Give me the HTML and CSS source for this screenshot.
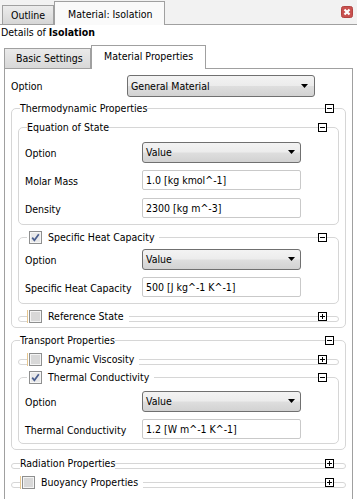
FILE: index.html
```html
<!DOCTYPE html>
<html>
<head>
  <meta charset="utf-8">
  <title>Details of Isolation</title>
  <link rel="stylesheet" href="styles.css">
</head>
<body>
  <div class="tabstrip">
    <div class="tab">Outline</div>
    <div class="tab active">Material: Isolation</div>
    <div class="close">
      <svg width="12" height="12" viewBox="0 0 12 12"><rect x="0.5" y="0.5" width="11" height="11" rx="2" fill="#c9514f" stroke="#b24442"/><path d="M3.5 3.5L8.5 8.5M8.5 3.5L3.5 8.5" stroke="#fff" stroke-width="2.2"/></svg>
    </div>
  </div>

  <div class="details">Details of <b>Isolation</b></div>

  <div class="subtabs">
    <div class="subtab">Basic Settings</div>
    <div class="subtab active">Material Properties</div>
  </div>

  <div class="panel">
    <div class="row top-row">
      <label>Option</label>
      <div class="select wide"><span>General Material</span><svg width="7" height="4" viewBox="0 0 7 4"><path d="M0 0h7L3.5 4z"/></svg></div>
    </div>

    <!-- Thermodynamic -->
    <div class="group">
      <div class="group-head">
        <span class="title">Thermodynamic Properties</span>
        <svg class="toggle" width="9" height="9" viewBox="0 0 9 9"><rect x="0.5" y="0.5" width="8" height="8" fill="#fff" stroke="#000"/><path d="M2 4.5h5" stroke="#000"/></svg>
      </div>
      <div class="group-body">
        <div class="group">
          <div class="group-head">
            <span class="title">Equation of State</span>
            <svg class="toggle" width="9" height="9" viewBox="0 0 9 9"><rect x="0.5" y="0.5" width="8" height="8" fill="#fff" stroke="#000"/><path d="M2 4.5h5" stroke="#000"/></svg>
          </div>
          <div class="group-body">
            <div class="row">
              <label>Option</label>
              <div class="select"><span>Value</span><svg width="7" height="4" viewBox="0 0 7 4"><path d="M0 0h7L3.5 4z"/></svg></div>
            </div>
            <div class="row">
              <label>Molar Mass</label>
              <div class="input">1.0 [kg kmol^-1]</div>
            </div>
            <div class="row">
              <label>Density</label>
              <div class="input">2300 [kg m^-3]</div>
            </div>
          </div>
        </div>

        <div class="group check-group">
          <div class="group-head">
            <span class="title check">
              <svg width="13" height="13" viewBox="0 0 13 13"><rect x="0.5" y="0.5" width="12" height="12" fill="#f6f6f6" stroke="#8e8f8f"/><rect x="2" y="2" width="9" height="9" fill="#e9e9e9"/><path d="M3.2 6.6L5.4 9.3L9.8 3.2" fill="none" stroke="#4a5e8e" stroke-width="1.7"/></svg>
              Specific Heat Capacity
            </span>
            <svg class="toggle" width="9" height="9" viewBox="0 0 9 9"><rect x="0.5" y="0.5" width="8" height="8" fill="#fff" stroke="#000"/><path d="M2 4.5h5" stroke="#000"/></svg>
          </div>
          <div class="group-body">
            <div class="row">
              <label>Option</label>
              <div class="select"><span>Value</span><svg width="7" height="4" viewBox="0 0 7 4"><path d="M0 0h7L3.5 4z"/></svg></div>
            </div>
            <div class="row">
              <label>Specific Heat Capacity</label>
              <div class="input">500 [J kg^-1 K^-1]</div>
            </div>
          </div>
        </div>

        <div class="group collapsed">
          <div class="group-head">
            <span class="title check mark">
              <svg width="13" height="13" viewBox="0 0 13 13"><rect x="0.5" y="0.5" width="12" height="12" fill="#f4f4f4" stroke="#8e8f8f"/><rect x="2" y="2" width="9" height="9" fill="#d8d8d8"/></svg>
              Reference State
            </span>
            <svg class="toggle" width="9" height="9" viewBox="0 0 9 9"><rect x="0.5" y="0.5" width="8" height="8" fill="#fff" stroke="#000"/><path d="M2 4.5h5M4.5 2v5" stroke="#000"/></svg>
          </div>
        </div>
      </div>
    </div>

    <!-- Transport -->
    <div class="group">
      <div class="group-head">
        <span class="title">Transport Properties</span>
        <svg class="toggle" width="9" height="9" viewBox="0 0 9 9"><rect x="0.5" y="0.5" width="8" height="8" fill="#fff" stroke="#000"/><path d="M2 4.5h5" stroke="#000"/></svg>
      </div>
      <div class="group-body">
        <div class="group collapsed">
          <div class="group-head">
            <span class="title check mark">
              <svg width="13" height="13" viewBox="0 0 13 13"><rect x="0.5" y="0.5" width="12" height="12" fill="#f4f4f4" stroke="#8e8f8f"/><rect x="2" y="2" width="9" height="9" fill="#d8d8d8"/></svg>
              Dynamic Viscosity
            </span>
            <svg class="toggle" width="9" height="9" viewBox="0 0 9 9"><rect x="0.5" y="0.5" width="8" height="8" fill="#fff" stroke="#000"/><path d="M2 4.5h5M4.5 2v5" stroke="#000"/></svg>
          </div>
        </div>

        <div class="group check-group spaced">
          <div class="group-head">
            <span class="title check">
              <svg width="13" height="13" viewBox="0 0 13 13"><rect x="0.5" y="0.5" width="12" height="12" fill="#f6f6f6" stroke="#8e8f8f"/><rect x="2" y="2" width="9" height="9" fill="#e9e9e9"/><path d="M3.2 6.6L5.4 9.3L9.8 3.2" fill="none" stroke="#4a5e8e" stroke-width="1.7"/></svg>
              Thermal Conductivity
            </span>
            <svg class="toggle" width="9" height="9" viewBox="0 0 9 9"><rect x="0.5" y="0.5" width="8" height="8" fill="#fff" stroke="#000"/><path d="M2 4.5h5" stroke="#000"/></svg>
          </div>
          <div class="group-body">
            <div class="row">
              <label>Option</label>
              <div class="select"><span>Value</span><svg width="7" height="4" viewBox="0 0 7 4"><path d="M0 0h7L3.5 4z"/></svg></div>
            </div>
            <div class="row">
              <label>Thermal Conductivity</label>
              <div class="input">1.2 [W m^-1 K^-1]</div>
            </div>
          </div>
        </div>
      </div>
    </div>

    <!-- Radiation -->
    <div class="group collapsed">
      <div class="group-head">
        <span class="title">Radiation Properties</span>
        <svg class="toggle" width="9" height="9" viewBox="0 0 9 9"><rect x="0.5" y="0.5" width="8" height="8" fill="#fff" stroke="#000"/><path d="M2 4.5h5M4.5 2v5" stroke="#000"/></svg>
      </div>
    </div>

    <!-- Buoyancy -->
    <div class="group collapsed">
      <div class="group-head">
        <span class="title check mark">
          <svg width="13" height="13" viewBox="0 0 13 13"><rect x="0.5" y="0.5" width="12" height="12" fill="#f4f4f4" stroke="#8e8f8f"/><rect x="2" y="2" width="9" height="9" fill="#d8d8d8"/></svg>
          Buoyancy Properties
        </span>
        <svg class="toggle" width="9" height="9" viewBox="0 0 9 9"><rect x="0.5" y="0.5" width="8" height="8" fill="#fff" stroke="#000"/><path d="M2 4.5h5M4.5 2v5" stroke="#000"/></svg>
      </div>
    </div>
  </div>
</body>
</html>
```

FILE: styles.css
```css
/* reset */
* {
  margin: 0;
  padding: 0;
  box-sizing: border-box;
}

body {
  font-family: "DejaVu Sans Condensed", "DejaVu Sans", sans-serif;
  font-stretch: condensed;
  font-size: 10.5px;
  color: #000;
  background: #fff;
  overflow: hidden;
}

/* top tab strip */
.tabstrip {
  display: flex;
  align-items: flex-end;
  height: 25px;
  padding-left: 2px;
  background: #f2f2f2;
  border-bottom: 1px solid #a0a0a0;
}

.tab {
  width: 52px;
  height: 19px;
  padding: 2px 0 0 8px;
  line-height: 14px;
  border: 1px solid #a0a0a0;
  border-bottom: none;
  background: linear-gradient(#ececec, #d6d6d6);
}

.tab.active {
  width: 111px;
  height: 24px;
  margin-bottom: -1px;
  padding: 5px 0 0 13px;
  background: #fafafa;
}

.close {
  margin-left: auto;
  margin-right: 4px;
  align-self: center;
  line-height: 0;
}

.details {
  height: 16px;
  padding: 1px 0 0 1px;
  line-height: 13px;
}

/* inner tabs */
.subtabs {
  display: flex;
  align-items: flex-end;
  height: 27px;
  padding-left: 4px;
}

.subtab {
  width: 87px;
  height: 20px;
  padding: 2px 0 0 11px;
  line-height: 14px;
  border: 1px solid #a0a0a0;
  border-bottom: none;
  background: linear-gradient(#eaeaea, #d8d8d8);
}

.subtab.active {
  position: relative;
  z-index: 1;
  width: 115px;
  height: 24px;
  margin-bottom: -1px;
  padding: 3px 0 0 12px;
  background: #fff;
}

.panel {
  margin: 0 4px;
  border: 1px solid #a0a0a0;
  border-bottom: none;
  padding: 6px 6px 30px;
}

/* rows */
.row {
  display: flex;
  align-items: center;
  height: 21px;
}

.row + .row {
  margin-top: 7px;
}

.row label {
  width: 117px;
  flex: none;
}

.top-row {
  height: 22px;
}

.top-row label {
  width: 116px;
}

.select {
  display: flex;
  align-items: center;
  justify-content: space-between;
  width: 159px;
  height: 21px;
  padding: 0 5px 1px 3px;
  border: 1px solid #707070;
  border-radius: 3px;
  background: linear-gradient(#f3f3f3, #ececec 48%, #dedede 52%, #d2d2d2);
}

.select.wide {
  width: 188px;
  height: 22px;
  padding-right: 6px;
}

.input {
  align-self: flex-start;
  width: 159px;
  height: 20px;
  padding-left: 3px;
  line-height: 18px;
  border: 1px solid #c9c9c9;
  border-radius: 2px;
  background: #fff;
}

/* group boxes */
.group {
  border: 1px solid #d6d6d6;
  border-radius: 5px;
}

.panel > .group {
  margin-top: 12px;
}

.panel > .top-row + .group {
  margin-top: 11px;
}

.panel > .collapsed {
  margin-top: 13px;
}

.group-body > .group {
  margin-top: 12px;
}

.group-head {
  display: flex;
  align-items: center;
  justify-content: space-between;
  height: 12px;
  margin-top: -7px;
  padding: 0 11px 0 8px;
}

.collapsed .group-head {
  margin-bottom: -1px;
}

.title {
  line-height: 12px;
  background: #fff;
}

.title.check {
  display: flex;
  align-items: center;
  gap: 6px;
  padding: 0 5px 0 2px;
}

.title.mark {
  border-left: 1px solid #e6c68e;
  padding-left: 1px;
}

.toggle {
  display: block;
  flex: none;
}

.group-body {
  padding: 1px 6px 5px;
}

.group-body > .row:first-child {
  margin-top: 8px;
}

.check-group .group-body > .row:first-child {
  margin-top: 5px;
}

.spaced .group-body {
  padding-bottom: 3px;
}

.spaced .group-body > .row:first-child {
  margin-top: 7px;
}
```
